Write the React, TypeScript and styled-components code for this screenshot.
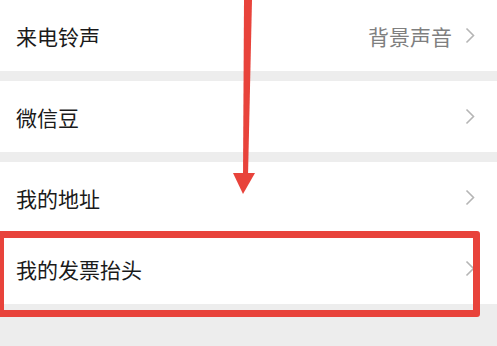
import React from "react";
import styled, { createGlobalStyle } from "styled-components";

const GlobalStyle = createGlobalStyle`
  html, body {
    margin: 0;
    padding: 0;
    background: #ededed;
  }
  body {
    font-family: "Noto Sans CJK SC", "Noto Sans", sans-serif;
  }
`;

const Page = styled.div`
  position: relative;
  width: 497px;
  height: 346px;
  overflow: hidden;
  background: #ededed;
`;

const List = styled.div`
  display: flex;
  flex-direction: column;
`;

const Group = styled.div<{ $gap: number }>`
  display: flex;
  flex-direction: column;
  margin-bottom: ${({ $gap }) => $gap}px;
  background: #ffffff;
`;

const Row = styled.div`
  height: 71px;
  display: flex;
  align-items: center;
  padding: 0 22px 0 16px;
  box-sizing: border-box;
  background: #ffffff;
`;

const Label = styled.span`
  flex: 1;
  font-size: 21px;
  color: #1a1a1a;
  letter-spacing: 0;
`;

const Value = styled.span`
  font-size: 21px;
  color: #7f7f7f;
  margin-right: 13px;
`;

const Chevron = () => (
  <svg width="10" height="17" viewBox="0 0 10 17">
    <path d="M1.5 1.5 L8.5 8.5 L1.5 15.5" fill="none" stroke="#b5b5b5" strokeWidth="1.6" />
  </svg>
);

const Highlight = styled.div`
  position: absolute;
  left: -3px;
  top: 231px;
  width: 483px;
  height: 86px;
  border: 7px solid #e8433b;
  border-radius: 3px;
  box-sizing: border-box;
  pointer-events: none;
`;

const Arrow = styled.svg`
  position: absolute;
  left: 0;
  top: 0;
  pointer-events: none;
`;

type Item = { label: string; value?: string };

const groups: { items: Item[]; gap: number }[] = [
  { items: [{ label: "来电铃声", value: "背景声音" }], gap: 10 },
  { items: [{ label: "微信豆" }], gap: 10 },
  { items: [{ label: "我的地址" }, { label: "我的发票抬头" }], gap: 0 },
];

export default function App() {
  return (
    <Page>
      <GlobalStyle />
      <List>
        {groups.map((g, i) => (
          <Group key={i} $gap={g.gap}>
            {g.items.map((it) => (
              <Row key={it.label}>
                <Label>{it.label}</Label>
                {it.value && <Value>{it.value}</Value>}
                <Chevron />
              </Row>
            ))}
          </Group>
        ))}
      </List>
      <Highlight />
      <Arrow width="497" height="346" viewBox="0 0 497 346">
        <polygon points="244,0 252,0 248,176 243,176" fill="#e8433b" />
        <polygon points="233,173 255,173 243,194" fill="#e8433b" />
      </Arrow>
    </Page>
  );
}
